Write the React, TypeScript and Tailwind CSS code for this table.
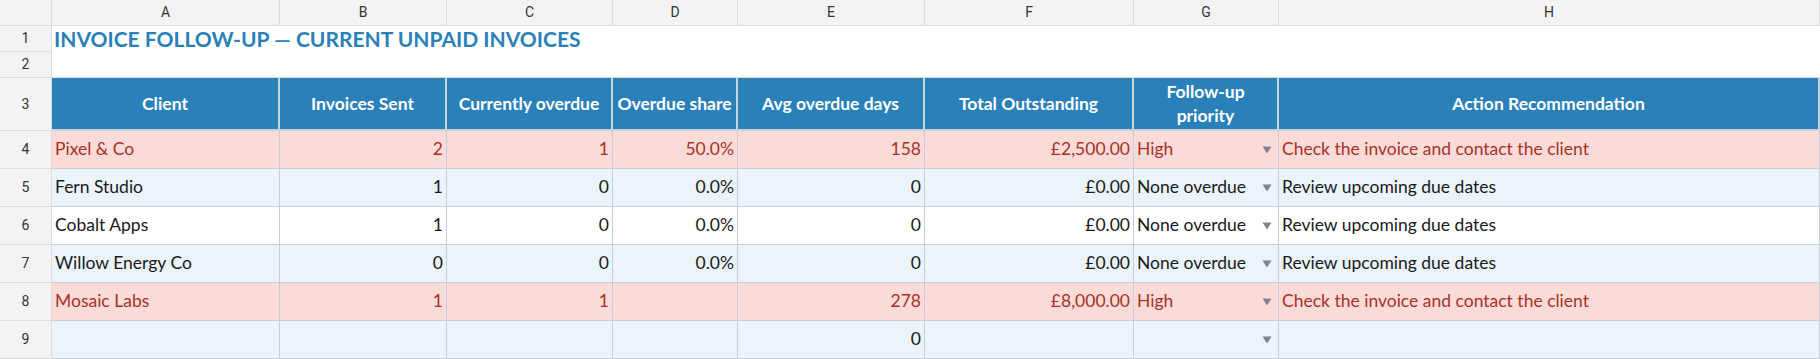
import React from 'react';

type Row = {
  client: string;
  sent: string;
  overdue: string;
  share: string;
  days: string;
  total: string;
  priority: string;
  action: string;
  tone: 'red' | 'blue' | 'white';
};

const rows: Row[] = [
  { client: 'Pixel & Co', sent: '2', overdue: '1', share: '50.0%', days: '158', total: '£2,500.00', priority: 'High', action: 'Check the invoice and contact the client', tone: 'red' },
  { client: 'Fern Studio', sent: '1', overdue: '0', share: '0.0%', days: '0', total: '£0.00', priority: 'None overdue', action: 'Review upcoming due dates', tone: 'blue' },
  { client: 'Cobalt Apps', sent: '1', overdue: '0', share: '0.0%', days: '0', total: '£0.00', priority: 'None overdue', action: 'Review upcoming due dates', tone: 'white' },
  { client: 'Willow Energy Co', sent: '0', overdue: '0', share: '0.0%', days: '0', total: '£0.00', priority: 'None overdue', action: 'Review upcoming due dates', tone: 'blue' },
  { client: 'Mosaic Labs', sent: '1', overdue: '1', share: '', days: '278', total: '£8,000.00', priority: 'High', action: 'Check the invoice and contact the client', tone: 'red' },
  { client: '', sent: '', overdue: '', share: '', days: '0', total: '', priority: '', action: '', tone: 'blue' },
];

const letters = ['A', 'B', 'C', 'D', 'E', 'F', 'G', 'H'];
const headers = ['Client', 'Invoices Sent', 'Currently overdue', 'Overdue share', 'Avg overdue days', 'Total Outstanding', 'Follow-up priority', 'Action Recommendation'];

const toneClass = {
  red: 'bg-[#fadbd8] text-[#a93226]',
  blue: 'bg-[#ebf3fb] text-[#1a1a1a]',
  white: 'bg-white text-[#1a1a1a]',
};

const RowNum: React.FC<{ n: number; h: string }> = ({ n, h }) => (
  <div className={`${h} flex items-center justify-center bg-[#f3f3f3] border-r border-b border-[#dcdcdc] text-[14px] text-[#333] font-['Roboto',sans-serif]`}>
    {n}
  </div>
);

const Cell: React.FC<{ tone: Row['tone']; right?: boolean; children?: React.ReactNode }> = ({ tone, right, children }) => (
  <div className={`h-[38px] flex items-center px-[3px] border-r border-b border-[#c6ced6] text-[17.5px] whitespace-nowrap overflow-hidden ${right ? 'justify-end' : ''} ${toneClass[tone]}`}>
    {children}
  </div>
);

const Arrow = () => (
  <svg width="10" height="8" viewBox="0 0 10 8" className="shrink-0">
    <path d="M0.5 0.5 L9.5 0.5 L5 7.5 Z" fill="#7b8592" />
  </svg>
);

export default function App() {
  return (
    <div className="w-[1820px] h-[359px] bg-white overflow-hidden font-['Lato',sans-serif]">
      <div className="grid grid-cols-[52px_228px_167px_166px_125px_187px_209px_145px_541px]">
        {/* column letters */}
        <div className="h-[26px] bg-[#f3f3f3] border-r border-b border-[#dcdcdc]" />
        {letters.map((l) => (
          <div key={l} className="h-[26px] flex items-center justify-center bg-[#f3f3f3] border-r border-b border-[#dcdcdc] text-[14px] text-[#333] font-['Roboto',sans-serif]">
            {l}
          </div>
        ))}

        {/* title */}
        <RowNum n={1} h="h-[26px]" />
        <div className="col-span-8 h-[26px] flex items-center pl-[2px] bg-white text-[21px] leading-[24px] font-bold text-[#2a80b9] whitespace-nowrap">
          INVOICE FOLLOW-UP — CURRENT UNPAID INVOICES
        </div>
        <RowNum n={2} h="h-[26px]" />
        <div className="col-span-8 h-[26px] bg-white border-b border-[#dcdcdc]" />

        {/* table header */}
        <RowNum n={3} h="h-[53px]" />
        {headers.map((h) => (
          <div key={h} className="h-[53px] flex items-center justify-center text-center px-1 bg-[#2a80b9] border-r-2 border-b-2 border-[#c9d3dc] text-white font-bold text-[17.5px] leading-[24px] whitespace-nowrap">
            {h === 'Follow-up priority' ? (
              <span>
                Follow-up
                <br />
                priority
              </span>
            ) : (
              h
            )}
          </div>
        ))}

        {rows.map((r, i) => (
          <React.Fragment key={i}>
            <RowNum n={i + 4} h="h-[38px]" />
            <Cell tone={r.tone}>{r.client}</Cell>
            <Cell tone={r.tone} right>{r.sent}</Cell>
            <Cell tone={r.tone} right>{r.overdue}</Cell>
            <Cell tone={r.tone} right>{r.share}</Cell>
            <Cell tone={r.tone} right>{r.days}</Cell>
            <Cell tone={r.tone} right>{r.total}</Cell>
            <div className={`h-[38px] flex items-center justify-between pl-[3px] pr-[6px] border-r border-b border-[#c6ced6] text-[17.5px] whitespace-nowrap ${toneClass[r.tone]}`}>
              <span>{r.priority}</span>
              <Arrow />
            </div>
            <Cell tone={r.tone}>{r.action}</Cell>
          </React.Fragment>
        ))}
      </div>
    </div>
  );
}
